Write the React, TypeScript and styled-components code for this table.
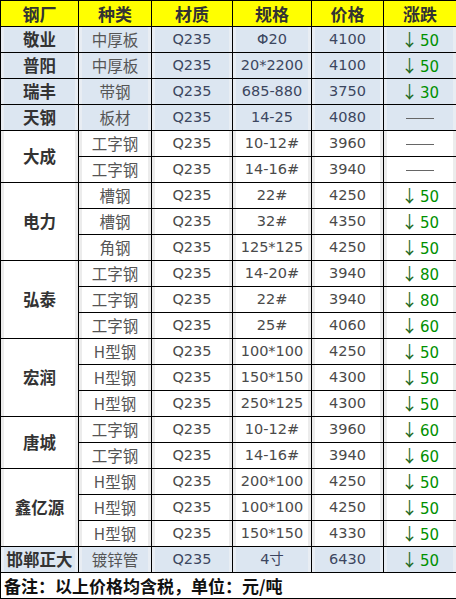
import { FC } from "react";
import styled, { createGlobalStyle } from "styled-components";

const GlobalStyle = createGlobalStyle`
    html, body {
        margin: 0;
        padding: 0;
        background: #fff;
    }
    body {
        font-family: "Noto Sans CJK SC", "DejaVu Sans", sans-serif;
    }
`;

const PriceTable = styled.table`
    width: 456px;
    table-layout: fixed;
    border-collapse: collapse;
    border: 1px solid #000;
`;

const HeadCell = styled.th`
    height: 25px;
    padding: 0;
    background-color: #ffff00;
    border: 1px solid #000;
    color: #333;
    font-size: 17px;
    font-weight: bold;
    line-height: 1;
    text-align: center;
    vertical-align: middle;
`;

const Cell = styled.td<{ $tinted?: boolean; $bold?: boolean }>`
    height: 25px;
    padding: 0;
    border: 1px solid #000;
    background-color: ${(p) => (p.$tinted ? "#dce6f1" : "#fff")};
    box-shadow: inset 3px 0 0 ${(p) => (p.$tinted ? "#e8edf3" : "#ececec")},
        inset -3px 0 0 ${(p) => (p.$tinted ? "#e8edf3" : "#ececec")};
    color: ${(p) => (p.$bold ? "#333" : p.$tinted ? "#3c4660" : "#4a4a4a")};
    font-family: ${(p) =>
        p.$bold
            ? `"Noto Sans CJK SC", sans-serif`
            : `"DejaVu Sans", "Noto Sans CJK SC", sans-serif`};
    font-size: ${(p) => (p.$bold ? "16.5px" : "14.5px")};
    font-weight: ${(p) => (p.$bold ? "bold" : "normal")};
    line-height: 1;
    text-align: center;
    vertical-align: middle;
    white-space: nowrap;
`;

const KindText = styled.span`
    font-family: "Noto Sans CJK SC", sans-serif;
    font-size: 15.5px;
    line-height: 1;
    vertical-align: middle;
    color: #555;
`;

const Change = styled.span`
    color: #009000;
    font-size: 15px;
    line-height: 1;
    vertical-align: middle;
`;

const Arrow = styled.span`
    color: #1f6a1f;
    margin-right: 2px;
    font-family: "Noto Sans CJK SC", sans-serif;
    font-size: 17px;
    line-height: 1;
`;

const Flat = styled.span`
    display: inline-block;
    width: 28px;
    border-top: 1px solid #666;
    vertical-align: middle;
`;

const NoteCell = styled.td`
    height: 25px;
    padding: 0 0 0 3px;
    border: 1px solid #000;
    font-family: "Noto Sans CJK SC", sans-serif;
    font-size: 17px;
    font-weight: bold;
    line-height: 1;
    color: #111;
    text-align: left;
    vertical-align: middle;
`;

interface Item {
    kind: string;
    spec: string;
    price: string;
    change: string | null;
}

interface Group {
    mill: string;
    tinted?: boolean;
    items: Item[];
}

const groups: Group[] = [
    { mill: "敬业", tinted: true, items: [{ kind: "中厚板", spec: "Φ20", price: "4100", change: "50" }] },
    { mill: "普阳", tinted: true, items: [{ kind: "中厚板", spec: "20*2200", price: "4100", change: "50" }] },
    { mill: "瑞丰", tinted: true, items: [{ kind: "带钢", spec: "685-880", price: "3750", change: "30" }] },
    { mill: "天钢", tinted: true, items: [{ kind: "板材", spec: "14-25", price: "4080", change: null }] },
    {
        mill: "大成",
        items: [
            { kind: "工字钢", spec: "10-12#", price: "3960", change: null },
            { kind: "工字钢", spec: "14-16#", price: "3940", change: null },
        ],
    },
    {
        mill: "电力",
        items: [
            { kind: "槽钢", spec: "22#", price: "4250", change: "50" },
            { kind: "槽钢", spec: "32#", price: "4350", change: "50" },
            { kind: "角钢", spec: "125*125", price: "4250", change: "50" },
        ],
    },
    {
        mill: "弘泰",
        items: [
            { kind: "工字钢", spec: "14-20#", price: "3940", change: "80" },
            { kind: "工字钢", spec: "22#", price: "3940", change: "80" },
            { kind: "工字钢", spec: "25#", price: "4060", change: "60" },
        ],
    },
    {
        mill: "宏润",
        items: [
            { kind: "H型钢", spec: "100*100", price: "4250", change: "50" },
            { kind: "H型钢", spec: "150*150", price: "4300", change: "50" },
            { kind: "H型钢", spec: "250*125", price: "4300", change: "50" },
        ],
    },
    {
        mill: "唐城",
        items: [
            { kind: "工字钢", spec: "10-12#", price: "3960", change: "60" },
            { kind: "工字钢", spec: "14-16#", price: "3940", change: "60" },
        ],
    },
    {
        mill: "鑫亿源",
        items: [
            { kind: "H型钢", spec: "200*100", price: "4250", change: "50" },
            { kind: "H型钢", spec: "100*100", price: "4250", change: "50" },
            { kind: "H型钢", spec: "150*150", price: "4330", change: "50" },
        ],
    },
    { mill: "邯郸正大", tinted: true, items: [{ kind: "镀锌管", spec: "4寸", price: "6430", change: "50" }] },
];

const headers = ["钢厂", "种类", "材质", "规格", "价格", "涨跌"];
const widths = [78, 73, 81, 79, 72, 73];

const App: FC = () => {
    return (
        <>
            <GlobalStyle />
            <PriceTable>
                <colgroup>
                    {widths.map((w, i) => (
                        <col key={i} style={{ width: w }} />
                    ))}
                </colgroup>
                <thead>
                    <tr>
                        {headers.map((h) => (
                            <HeadCell key={h}>{h}</HeadCell>
                        ))}
                    </tr>
                </thead>
                <tbody>
                    {groups.map((g) =>
                        g.items.map((it, i) => (
                            <tr key={g.mill + i}>
                                {i === 0 && (
                                    <Cell $tinted={g.tinted} $bold rowSpan={g.items.length}>
                                        {g.mill}
                                    </Cell>
                                )}
                                <Cell $tinted={g.tinted}>
                                    <KindText>{it.kind}</KindText>
                                </Cell>
                                <Cell $tinted={g.tinted}>Q235</Cell>
                                <Cell $tinted={g.tinted}>{it.spec}</Cell>
                                <Cell $tinted={g.tinted}>{it.price}</Cell>
                                <Cell $tinted={g.tinted}>
                                    {it.change ? (
                                        <Change>
                                            <Arrow>↓</Arrow>
                                            {it.change}
                                        </Change>
                                    ) : (
                                        <Flat />
                                    )}
                                </Cell>
                            </tr>
                        ))
                    )}
                    <tr>
                        <NoteCell colSpan={6}>备注：以上价格均含税，单位：元/吨</NoteCell>
                    </tr>
                </tbody>
            </PriceTable>
        </>
    );
};

export default App;
